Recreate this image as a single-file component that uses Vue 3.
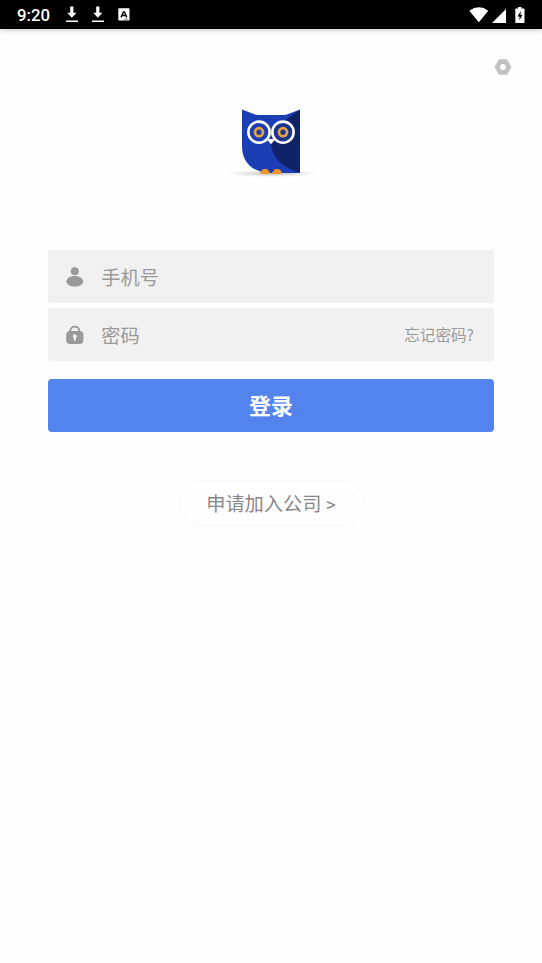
<script setup>
import { ref } from 'vue'

const phone = ref('')
const password = ref('')
</script>

<template>
  <div class="screen">
    <header class="status">
      <span class="time">9:20</span>
      <svg v-for="n in 2" :key="n" class="download" width="14" height="17" viewBox="0 0 14 17">
        <path d="M5.2 .6h3.2v6.2h3.1L6.8 11.8 2.2 6.8h3zM1 14.4h12v1.6H1z" fill="#fff" />
      </svg>
      <svg class="badge" width="12" height="13" viewBox="0 0 12 13">
        <rect x="0.3" y="0.2" width="11.2" height="12.4" rx="0.8" fill="#fff" />
        <path d="M3 9.4 5.4 4h1L8.8 9.4M4 7.6h3.8" fill="none" stroke="#111" stroke-width="1.5" />
        <path d="M6.3 11.2h3.2" stroke="#333" stroke-width="0.8" />
      </svg>
      <div class="system">
        <svg width="20" height="16" viewBox="0 0 20 16">
          <path d="M0.3 3.7Q10-3.2 19.3 3.7L9.8 15.2z" fill="#fff" />
        </svg>
        <svg class="signal" width="14" height="14" viewBox="0 0 14 14">
          <path d="M0 14 14 0v14z" fill="#fff" />
        </svg>
        <svg class="battery" width="10" height="16" viewBox="0 0 10 16">
          <path d="M3 0h3.5v1.6H9q.5 0 .5.6v13q0 .7-.7.7H1q-.7 0-.7-.7v-13q0-.6.6-.6H3z" fill="#fff" />
          <path d="M5.8 4 2.5 9.4h2v3.8L7.4 8H5.5z" fill="#000" />
        </svg>
      </div>
    </header>

    <div class="toolbar">
      <svg class="settings" width="18" height="16" viewBox="0 0 18 16">
        <path d="M5.6 1.4h6.8L16.2 8l-3.8 6.6H5.6L1.8 8z" fill="#c1c1c1" stroke="#c1c1c1" stroke-width="2.2" stroke-linejoin="round" />
        <circle cx="9" cy="8" r="2.9" fill="#fff" />
      </svg>
    </div>

    <main>
      <svg class="logo" width="96" height="72" viewBox="0 0 96 72">
        <defs>
          <radialGradient id="shade">
            <stop offset="0" stop-color="#777" stop-opacity="0.55" />
            <stop offset="0.5" stop-color="#999" stop-opacity="0.25" />
            <stop offset="1" stop-color="#aaa" stop-opacity="0" />
          </radialGradient>
          <clipPath id="body">
            <path d="M19 1.4 32 6.4Q35 7 38 7H58Q61 7 64 6.4L77 1.4V65H49C28 65 19 53 19 38z" />
          </clipPath>
        </defs>
        <ellipse cx="49" cy="65.6" rx="47" ry="3.6" fill="url(#shade)" />
        <g clip-path="url(#body)">
          <rect x="18" width="60" height="67" fill="#1c3eb4" />
          <path d="M78 1Q67 8 61 13C48 23 45 34 51 46Q57 59 78 65z" fill="#102268" />
        </g>
        <circle cx="36" cy="24.2" r="10.6" fill="#1c3eb4" stroke="#fff" stroke-width="2.6" />
        <circle cx="60" cy="24.2" r="10.6" fill="#193390" stroke="#fff" stroke-width="2.6" />
        <path d="M43.5 31h9l-4.5 5.2z" fill="#fff" />
        <circle cx="36" cy="24.2" r="4" fill="none" stroke="#eba13c" stroke-width="2.8" />
        <circle cx="60" cy="24.2" r="4" fill="none" stroke="#eba13c" stroke-width="2.8" />
        <path d="M38 65.5q-1-2 1-2 .1-2.6 2-1.7 1.2-1 2.4 0 2-.4 2 1.7 1.6.2.6 2zM50 65.5q-1-2 1-2 .1-2.6 2-1.7 1.2-1 2.4 0 2-.4 2 1.7 1.6.2.6 2z" fill="#f5952a" stroke="#f5952a" />
      </svg>

      <form @submit.prevent>
        <label class="field">
          <svg width="18" height="20" viewBox="0 0 18 20">
            <circle cx="8.8" cy="4.2" r="4" fill="#999" />
            <path d="M.2 14.4C2 7.3 15.6 7.3 17.4 14.4 15.4 21.3 2.2 21.3 .2 14.4z" fill="#999" />
          </svg>
          <input v-model="phone" type="tel" placeholder="手机号" />
        </label>
        <label class="field">
          <svg width="18" height="20" viewBox="0 0 18 20">
            <path d="M4.3 8V5.6Q4.8 1.6 8.8 1.6T13.3 5.6V8" fill="none" stroke="#999" stroke-width="1.9" />
            <rect x="0.2" y="6" width="17.2" height="13" rx="4" fill="#999" />
            <path d="M8.8 9.2a2 2 0 0 1 1.2 3.6l-.5 3.2H8.1l-.5-3.2a2 2 0 0 1 1.2-3.6z" fill="#f1f1f1" />
          </svg>
          <input v-model="password" type="password" placeholder="密码" />
          <a class="forgot">忘记密码?</a>
        </label>
        <button class="login">登录</button>
      </form>

      <button class="join">申请加入公司 <span class="arrow">&gt;</span></button>
    </main>
  </div>
</template>

<style>
body {
  background: #fefefe;
}
</style>

<style scoped>
.screen {
  min-height: 963px;
  font-family: "Noto Sans CJK SC", sans-serif;
}
.status {
  display: flex;
  align-items: center;
  box-sizing: border-box;
  height: 29px;
  padding: 0 17px;
  background: #000;
  box-shadow: 0 1px 5px rgba(0, 0, 0, 0.22);
}
.time {
  width: 48px;
  margin-top: 1px;
  color: #fff;
  font: 500 16.8px/20px Roboto, sans-serif;
}
.download {
  margin-right: 12.4px;
}
.badge {
  margin-left: 0.6px;
}
.system {
  display: flex;
  align-items: flex-start;
  margin-left: auto;
}
.signal {
  margin: 2px 9px 0 2.6px;
}
.toolbar {
  display: flex;
  justify-content: flex-end;
  padding: 30px 29.6px 0;
}
.settings {
  display: block;
}
main {
  display: flex;
  flex-direction: column;
  align-items: center;
  padding: 33px 48px 0;
}
.logo {
  display: block;
}
form {
  display: flex;
  flex-direction: column;
  gap: 5px;
  width: 100%;
  margin-top: 70px;
}
.field {
  display: flex;
  align-items: center;
  box-sizing: border-box;
  height: 53px;
  padding: 0 20px 0 18px;
  border-radius: 2px;
  background: #f1f1f1;
}
input {
  flex: 1;
  min-width: 0;
  height: 50px;
  margin-left: 17.3px;
  padding: 0;
  box-sizing: border-box;
  border: 0;
  outline: 0;
  background: transparent;
  color: #555;
  font: 19.2px "Noto Sans CJK SC", sans-serif;
}
input::placeholder {
  color: #999;
  opacity: 1;
}
.forgot {
  padding-bottom: 2px;
  color: #999;
  font-size: 15.6px;
}
.login {
  height: 53px;
  margin-top: 13px;
  padding: 0 0 4px;
  border: 0;
  border-radius: 4px;
  background: #5384ed;
  color: #fff;
  font: 700 22px "Noto Sans CJK SC", sans-serif;
}
.join {
  width: 186px;
  height: 46px;
  margin-top: 48px;
  padding: 0;
  border: 1px solid #f7f7f7;
  border-radius: 23px;
  background: #fefefe;
  color: #888;
  font: 19.2px "Noto Sans CJK SC", sans-serif;
}
.arrow {
  font-family: Roboto, sans-serif;
}
</style>
